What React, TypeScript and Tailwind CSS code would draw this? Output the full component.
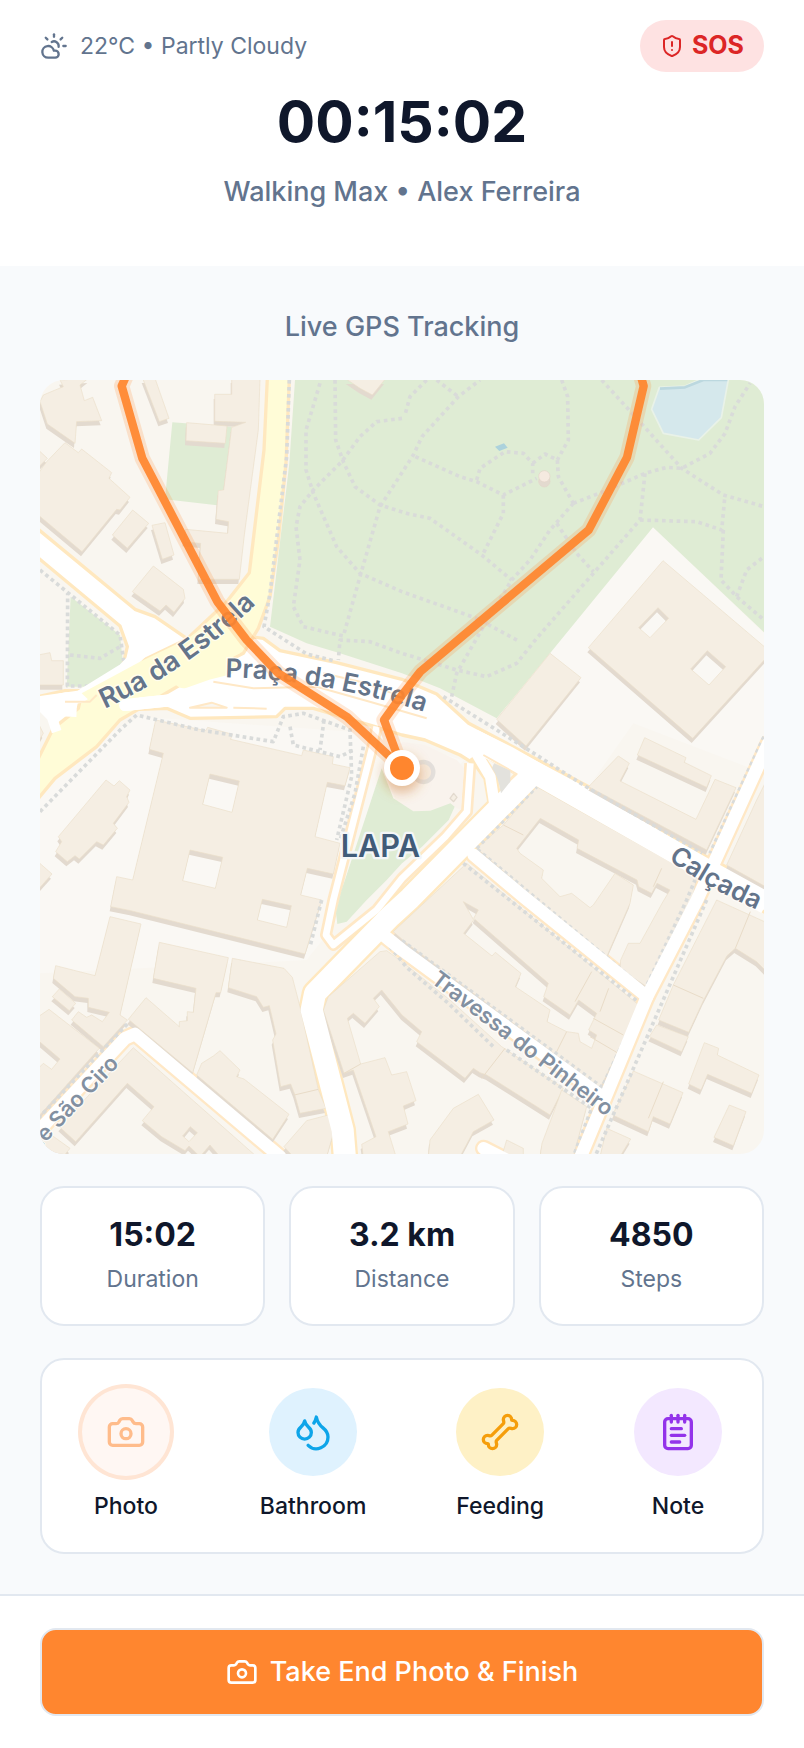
import React from 'react';
import { Bone, Camera, CloudSun, Droplets, NotepadText, ShieldAlert } from 'lucide-react';

const BUILDINGS = [
  'M60 0L145 -5L120 15L133 62L158 52L185 122L110 125L105 190L22 132L0 65L10 45L70 20Z',
  'M75 188L115 218L125 207L215 278L207 295L270 352L240 390L230 388L126 515L-5 405L-5 280L20 245Z',
  'M-5 210L22 235L-5 262Z',
  'M278 390L326 430L262 505L217 465Z',
  'M336 436L375 428L402 525L367 538Z',
  'M340 558L430 628L435 655L402 697L378 675L360 693L277 635Z',
  'M308 -5L345 -5L387 115L358 125Z',
  'M575 -5L660 -5L655 150L613 465L598 598L475 598L482 490L430 485L437 448L563 460L566 425L528 418L535 332L551 330L575 142L617 127L524 124L524 43L575 43Z',
  'M440 128L561 138L556 190L438 182Z',
  'M920 -2L1035 -2L997 45L960 25Z',
  'M-5 825L30 818L35 842L70 842L70 915L-5 915Z',
  'M-5 1030L10 1060L-5 1085Z',
  // basilica with its courtyards
  'M347 1020L497 1052L503 1042L577 1063L572 1078L785 1127L790 1110L880 1130L877 1152L930 1163L915 1217L862 1207L825 1370L900 1390L880 1482L802 1465L782 1545L845 1560L795 1722L272 1592L212 1580L230 1490L278 1500L370 1120L328 1108ZM510 1182L598 1203L576 1297L488 1273ZM450 1410L548 1432L526 1525L428 1502ZM667 1558L754 1577L740 1642L652 1620Z',
  'M198 1200L222 1218L238 1202L270 1230L260 1250L267 1267L220 1330L232 1345L190 1395L170 1385L118 1437L105 1427L82 1445L47 1415L65 1385L55 1370Z',
  'M-5 1446L36 1482L-5 1528Z',
  'M210 1610L303 1632L240 1905L262 1920L190 2000L95 1920L115 1895L140 1912L155 1905L187 1925L208 1897L145 1882L145 1855L105 1850L40 1795L47 1757L165 1787Z',
  'M58 1827L107 1870L88 1892L37 1850Z',
  'M-5 1910L27 1888L178 2005L-5 2210L-5 2065L10 2050L35 2068L60 2037L-5 1982Z',
  'M358 1687L565 1733L542 1838L528 1838L458 2078L265 1918L318 1853L418 1940L418 1925L442 1922L442 1895L460 1897L468 1825L340 1795Z',
  'M577 1735L732 1765L757 1792L780 1880L835 2130L858 2185L780 2200L763 2140L752 2112L722 2120L698 1980L708 1962L688 1877L670 1882L650 1850L565 1823Z',
  'M540 2012L600 2070L590 2090L612 2097L747 2203L698 2278L470 2085L485 2050L520 2028Z',
  'M732 2300L800 2222L865 2205L880 2260L860 2330L760 2330Z',
  'M280 2003L650 2330L540 2330L510 2295L480 2330L447 2298L435 2312L365 2270L307 2222L342 2180L262 2110L107 2285L58 2240ZM451 2240L472 2258L447 2285L428 2268Z',
  'M20 2255L90 2305L70 2330L-5 2330L-5 2275Z',
  'M1020 1715L1040 1712L1086 1745L1230 1860L1385 2000L1570 2125L1530 2205L1340 2085L1320 2078L1300 2065L1275 2095L1130 1985L1145 1955L1086 1905L1025 1830L1000 1855L1018 1880L975 1930L940 1900L922 1915L962 2052L1035 2033L1055 2085L1100 2075L1128 2162L1090 2178L1104 2232L1045 2255L1068 2330L970 2330L965 2293L1008 2270L940 2070L912 2080L850 1890L865 1850Z',
  'M1280 1450L1790 1870L1800 1880L1680 2125L1100 1690L1060 1655ZM1270 1565L1315 1590L1301 1615L1525 1810L1511 1850L1590 1905L1616 1860L1670 1900L1646 1950L1670 1965L1655 2005L1620 1985L1615 1960L1580 1955L1521 1925L1530 1890L1426 1820L1443 1780L1366 1717L1356 1728L1271 1660L1301 1620Z',
  'M1490 1220L1970 1490L1960 1545L1820 1820L1700 1740L1310 1405L1390 1335ZM1501 1315L1616 1380L1611 1405L1791 1500L1796 1520L1835 1540L1851 1510L1890 1530L1866 1570L1800 1690L1765 1690L1742 1740L1740 1765L1700 1730L1770 1570L1780 1515L1725 1480L1660 1575L1650 1583L1595 1540L1560 1550L1505 1495L1510 1470L1440 1420L1430 1405Z',
  'M1530 820L1623 893L1458 1098L1370 1018Z',
  'M1869 542L2180 806L2180 832L1958 1075L1645 803ZM1854 683L1886 715L1830 773L1796 743ZM2002 812L2057 860L2007 915L1952 867Z',
  'M1814 1073L1938 1133L1933 1147L2014 1187L2000 1222L1792 1125Z',
  'M1735 1128L1768 1150L1740 1203L1968 1318L2025 1198L2088 1223L2000 1410L1646 1220Z',
  'M2180 1200L2150 1260L2060 1455L2180 1522Z',
  'M2030 1560L2180 1628L2180 1775L2150 1745L2086 1705L2061 1727L1990 1862L1946 1957L1856 1920L1900 1815Z',
  'M1850 1935L1945 1970L1925 2015L1828 1970Z',
  'M1993 1988L2036 2005L2032 2025L2157 2085L2135 2140L2003 2083L1983 2130L1946 2112Z',
  'M2068 2175L2118 2195L2080 2297L2022 2272Z',
  'M1780 2073L1929 2138L1890 2232L1840 2210L1825 2255L1718 2205Z',
  'M1700 2245L1772 2277L1740 2330L1680 2330Z',
  'M1315 2143L1362 2220L1300 2255L1260 2330L1165 2330L1170 2280L1240 2185Z',
  'M1400 2280L1450 2305L1450 2330L1385 2330Z',
  'M1565 2130L1640 2180L1600 2330L1500 2330L1506 2290L1540 2200Z',
];

// party walls between neighbouring houses
const WALLS =
  'M1390 1335L1450 1365M1865 1465L1840 1520M1655 1775L1605 1865M1706 1825L1680 1895M1660 1915L1750 1965M1650 1970L1735 2020M1580 1955L1545 2025M1395 2005L1325 2095M1900 1815L1990 1855M1870 2105L1825 2215M2131 1595L2086 1705M763 2145L835 2128M962 2052L912 2080';

const FOOTPATHS = [
  'M840 10L798 150L798 270L820 340L890 500L960 580L1086 635L1310 715L1440 785',
  'M885 0L887 180L910 245L945 320L1020 375L1100 400L1170 415L1325 525L1415 600',
  'M1086 115L1010 125L960 170L905 245L820 330L780 380L768 440L780 540L760 680L790 740L910 768L960 590L1020 380L1120 225L1146 170L1255 50L1320 0',
  'M1126 230L1260 290L1310 305L1390 345L1490 295',
  'M1190 0L1255 50M1160 0L1110 50L1095 105',
  'M1310 300L1320 265L1395 215L1450 220L1478 250L1478 280',
  'M1478 250L1515 222L1552 240L1555 290L1600 370',
  'M1565 0L1583 50L1585 180L1552 240',
  'M1390 345L1390 400L1330 520',
  'M1600 370L1530 450L1470 540L1415 600L1360 690L1310 775L1250 880L1235 950',
  'M1600 370L1690 335L1815 280L1880 262L1925 265L2010 220L2055 160L2085 80L2130 10',
  'M1685 0L1790 115L1925 265L2050 345L2172 380',
  'M1815 280L1800 420L1660 580L1490 775L1430 850L1340 890L1250 870L1086 820L990 785L900 780L895 840',
  'M1800 420L1970 425L2045 450L2055 345M2050 450L2043 600L2090 650L2172 720M2090 650L2120 570L2172 530',
  'M1550 430L1610 520L1660 575',
];

const SIDEWALKS = [
  'M748 0L740 230L690 640L672 740L800 822L880 842',
  'M1210 950L1450 1100L1646 1225L1986 1420M2172 1070L2010 1420',
  'M0 570L240 765L252 850L165 918L82 918L83 640M90 825L180 835L240 800',
  'M0 1295L240 1050L290 1005L480 1050L700 1085L730 1010L790 1000L930 1050L935 1190L890 1380',
  'M970 1100L945 1240L900 1380M750 1040L760 1095L900 1130L940 1110M852 1020L840 1110',
  'M845 1560L810 1700M1310 1405L1490 1220',
  'M1312 1408L1815 1828L1940 1560L1965 1500M1270 1450L1800 1870',
  'M2000 1560L1665 2330M1086 1682L1686 2122L1800 1880',
  'M1050 1700L1100 1762L1225 1870L1360 2000M1400 2010L1655 2185L1600 2330',
  'M-5 2215L262 1932',
];

const MINOR_ROADS = [
  'M1010 1040L1000 1090L880 1560L858 1665L880 1695L1010 1590L1086 1495L1216 1370L1281 1295L1291 1150',
];

const SIDE_ROADS = [
  'M1301 1425L1450 1550L1821 1850',
  'M1030 1665L1086 1710L1686 2150',
  'M2185 1090L2010 1475L1971 1560L1821 1850L1620 2335',
  'M-20 2270L255 1975L285 1962L720 2330',
  'M1331 2305L1420 2350',
];

const MAIN_ROAD = 'M1470 1190L1110 1555L1050 1610L825 1840L815 1890L908 2250L915 2335';

const SQUARE =
  'M-5 448L285 688L345 710L440 775L560 760L670 775L720 812L890 848L1086 898L1190 942L1286 1030L1400 1090L1646 1220L1990 1425L2180 1525L2180 1600L1990 1500L1500 1222L1435 1185L1320 1120L1300 1150L1260 1125L1155 1080L1086 1065L1005 1040L820 985L735 985L710 1010L450 1015L380 985L240 990L110 1010L60 1055L40 1010L-5 985L-5 950L75 932L150 932L245 872L262 800L240 738L-5 534Z';

const AVENUE =
  'M682 -5L748 -5L738 250L715 480L690 650L655 745L610 820L480 885L420 915L300 985L240 1020L170 1100L45 1195L-5 1255L-5 1135L40 1045L115 985L125 940L300 845L440 778L560 665L628 578L672 210Z';

const ROUTE =
  'M262 -20L245 18L307 235L532 665L620 780L715 880L920 1010L1086 1164L1032 1020L1086 945L1141 875L1646 450L1761 232L1811 18L1800 -20';

const LiveMap: React.FC = () => {
  return (
    <svg
      viewBox="0 0 2172 2322"
      role="img"
      aria-label="Live map of the walk around Praça da Estrela"
      className="block h-auto w-full rounded-3xl bg-[#f9f6f0]"
      fontFamily="Inter, 'Noto Sans', sans-serif"
      strokeLinejoin="round"
    >
      <defs>
        <path id="rua" d="M194 986Q480 855 710 610" />
        <path id="praca" d="M556 892Q870 897 1220 1018" />
        <path id="calcada" d="M1884 1438Q2010 1532 2200 1610" />
        <path id="ciro" d="M-12 2318L350 1936" />
        <path id="travessa" d="M1170 1806L1760 2258" />
        <filter id="glow" x="-50%" y="-50%" width="200%" height="200%">
          <feGaussianBlur stdDeviation="18" />
        </filter>
      </defs>

      <path d="M0 1170L300 1010L1000 1060L1300 1150L1646 1220L1780 1030L2172 1180L2172 760L1839 442L1370 1015L800 1740L0 1780Z" fill="#faf8f4" />

      {/* parks and water */}
      <g fill="#dfecd4">
        <path d="M765 0L748 250L690 740L800 790L900 820L1086 880L1200 925L1370 1015L1530 820L1839 442L2172 757L2172 0Z" />
        <path d="M397 127L575 140L551 330L535 332L531 376L375 358Z" />
        <path d="M92 650L240 765L250 860L165 920L80 920Z" />
      </g>
      <path d="M1858 22L1935 18L1990 -6L2066 -6L2044 113L1976 180L1870 160L1835 88Z" fill="#d5e8ec" stroke="#e9f2e8" strokeWidth="5" />
      <path d="M1860 26L1935 22L1990 0L2062 0" fill="none" stroke="#bcd8df" strokeWidth="8" />
      <path d="M1365 200L1392 190L1403 203L1378 213Z" fill="#acd2dc" />

      <g fill="none" stroke="#d9dbd9" strokeWidth="11" strokeDasharray="11 11">
        {FOOTPATHS.map((d) => (
          <path key={d} d={d} />
        ))}
      </g>

      {/* roads: casing first, then surface */}
      <path d={SQUARE} fill="#ffffff" stroke="#ffe8bf" strokeWidth="10" />
      <g fill="none" stroke="#ffe8c6">
        {MINOR_ROADS.map((d) => (
          <path key={d} d={d} strokeWidth="36" />
        ))}
        {SIDE_ROADS.map((d) => (
          <path key={d} d={d} strokeWidth="52" strokeLinecap="round" />
        ))}
      </g>
      <path d={MAIN_ROAD} fill="none" stroke="#ffe8bf" strokeWidth="80" />
      <path d="M1306 1125L1351 1190L1366 1280" fill="none" stroke="#ffe8bf" strokeWidth="44" />
      <path d={AVENUE} fill="#fffcd7" stroke="#ffe8bf" strokeWidth="10" />

      {/* the plaza next to the basilica */}
      <path d="M1086 1085L1155 1095L1250 1140L1272 1165L1262 1290L1231 1275L1171 1295L1120 1298L1070 1270L1030 1165Z" fill="#f9f3ed" />
      <path d="M1025 1165L1060 1255L1120 1294L1171 1292L1231 1270L1244 1280L1226 1320L1146 1400L1086 1450L1040 1500L980 1560L920 1625L892 1632L888 1600L905 1530Z" fill="#dfecd4" />
      <circle cx="1150" cy="1176" r="30" fill="#f6e9dc" stroke="#e3dfdb" strokeWidth="13" />
      <path d="M1241 1240L1251 1252L1241 1265L1230 1255Z" fill="#f5eee3" stroke="#e3dacf" strokeWidth="4" />

      <g transform="translate(-3 14)" fill="#e3dacf" fillRule="evenodd">
        {BUILDINGS.map((d) => (
          <path key={d} d={d} />
        ))}
      </g>
      <g fill="#f5eee3" fillRule="evenodd" stroke="#ecdfca" strokeWidth="2">
        {BUILDINGS.map((d) => (
          <path key={d} d={d} />
        ))}
      </g>
      <path d={WALLS} fill="none" stroke="#e9dcc8" strokeWidth="3" />
      <g stroke="#e3d5c9" strokeWidth="2">
        <circle cx="1513" cy="304" r="17" fill="#e3dacf" />
        <circle cx="1513" cy="289" r="17" fill="#f5eae0" />
      </g>

      <g fill="none" stroke="#d9dbda" strokeWidth="11" strokeDasharray="11 10">
        {SIDEWALKS.map((d) => (
          <path key={d} d={d} />
        ))}
      </g>

      <g fill="none" stroke="#ffffff">
        {MINOR_ROADS.map((d) => (
          <path key={d} d={d} strokeWidth="20" />
        ))}
        {SIDE_ROADS.map((d) => (
          <path key={d} d={d} strokeWidth="38" strokeLinecap="round" />
        ))}
        <path d={MAIN_ROAD} strokeWidth="66" />
        <path d="M1306 1115L1351 1190L1366 1290" strokeWidth="32" />
        <path d="M1300 1080L1400 1130L1990 1465L2180 1570" strokeWidth="66" />
        <path d="M340 780L250 870L120 950L-5 968M60 990L110 992" strokeWidth="38" />
        <path d="M0 975L35 1010L50 1055" strokeWidth="30" />
        <path d="M255 975L450 955L820 945L1086 1010L1250 1050" strokeWidth="36" strokeLinecap="round" />
      </g>
      <path d="M125 940L300 845L440 778L560 690L600 820L480 880L300 950L200 1010Z" fill="#fffcd7" />
      <path d="M255 975L450 955" fill="none" stroke="#ffffff" strokeWidth="36" strokeLinecap="round" />
      <path d="M430 895L500 870L560 855" fill="none" stroke="#fffcd7" strokeWidth="60" strokeLinecap="round" />

      {/* traffic islands and kerbs */}
      <g fill="none" stroke="#ffe8c6" strokeWidth="6">
        <path d="M450 983L515 968L560 983ZM580 983L680 986" fill="#f9f6f0" />
        <path d="M520 905L640 925L830 920L1000 968L1160 1015M850 880L960 905L1086 950" />
        <path d="M75 965L150 965L170 945" />
        <path d="M1330 1125L1430 1182L1400 1210" />
      </g>
      <path d="M1362 1150L1411 1172L1411 1205L1383 1240Q1375 1190 1356 1165Z" fill="#e3e2dd" />

      {/* street names */}
      <g fill="#64748a" stroke="#ffffff" strokeOpacity="0.6" strokeWidth="8" paintOrder="stroke" fontWeight="600" fontSize="78">
        <text fontSize="81"><textPath href="#rua">Rua da Estrela</textPath></text>
        <text><textPath href="#praca">Praça da Estrela</textPath></text>
        <text><textPath href="#calcada">Calçada</textPath></text>
      </g>
      <g fill="#8290a1" stroke="#ffffff" strokeOpacity="0.7" strokeWidth="8" paintOrder="stroke" fontWeight="600" fontSize="66">
        <text><textPath href="#ciro">de São Ciro</textPath></text>
        <text><textPath href="#travessa">Travessa do Pinheiro</textPath></text>
      </g>
      <text x="1021" y="1431" textAnchor="middle" fontSize="92" fontWeight="600" fill="#415b78" stroke="#f4f6f8" strokeWidth="14" paintOrder="stroke">
        LAPA
      </text>

      {/* walked route and current position */}
      <path d={ROUTE} fill="none" stroke="#ff8a33" strokeOpacity="0.2" strokeWidth="46" />
      <path d={ROUTE} fill="none" stroke="#ff862e" strokeOpacity="0.92" strokeWidth="25" />
      <circle cx="1086" cy="1182" r="56" fill="#c9762f" fillOpacity="0.45" filter="url(#glow)" />
      <circle cx="1086" cy="1164" r="54" fill="#ffffff" />
      <circle cx="1086" cy="1164" r="36" fill="#ff862e" />
    </svg>
  );
};

interface StatCardProps {
  value: string;
  label: string;
}

const StatCard: React.FC<StatCardProps> = ({ value, label }) => {
  return (
    <div className="flex flex-col items-center rounded-3xl border-2 border-slate-200 bg-white px-4 py-6">
      <p className="text-[32px] leading-[46px] font-bold text-slate-900">{value}</p>
      <p className="mt-1 mb-1 text-[23px] leading-[34px] text-slate-500">{label}</p>
    </div>
  );
};

interface ActionButtonProps {
  label: string;
  circle: string;
  children: React.ReactNode;
}

const ActionButton: React.FC<ActionButtonProps> = ({ label, circle, children }) => {
  return (
    <button type="button" className="flex flex-col items-center gap-3">
      <span className={`flex size-[88px] items-center justify-center rounded-full ${circle}`}>{children}</span>
      <span className="text-[23px] leading-9 font-medium text-slate-900">{label}</span>
    </button>
  );
};

const App: React.FC = () => {
  return (
    <div className="flex min-h-screen flex-col bg-slate-50 font-['Inter','Liberation_Sans',sans-serif]">
      <header className="bg-white px-10 pt-5 pb-[54px]">
        <div className="flex items-center justify-between">
          <div className="flex items-center gap-3 text-[23px] leading-8 text-slate-500">
            <CloudSun size={28} />
            <span>22°C • Partly Cloudy</span>
          </div>
          <button
            type="button"
            className="flex h-[52px] items-center gap-2 rounded-full bg-[#fee2e2] px-5 text-[25px] font-bold text-[#dc2626]"
          >
            <ShieldAlert size={24} />
            SOS
          </button>
        </div>
        <h1 className="mt-5 text-center text-[57px] leading-[60px] font-bold text-slate-900">00:15:02</h1>
        <p className="mt-5 text-center text-[27px] leading-10 font-medium text-slate-500">Walking Max • Alex Ferreira</p>
      </header>

      <main className="flex flex-1 flex-col gap-8 p-10">
        <h2 className="text-center text-[27px] leading-[42px] font-medium text-slate-500">Live GPS Tracking</h2>

        <LiveMap />

        <section className="grid grid-cols-3 gap-6">
          <StatCard value="15:02" label="Duration" />
          <StatCard value="3.2 km" label="Distance" />
          <StatCard value="4850" label="Steps" />
        </section>

        <section className="flex justify-between rounded-3xl border-2 border-slate-200 bg-white px-10 py-7">
          <ActionButton label="Photo" circle="bg-[#fff7f3] text-[#ffbc8b] ring-4 ring-[#ffe5d4]">
            <Camera size={40} />
          </ActionButton>
          <ActionButton label="Bathroom" circle="bg-[#dff2fe] text-[#0ea5e9]">
            <Droplets size={40} />
          </ActionButton>
          <ActionButton label="Feeding" circle="bg-[#fef1c6] text-[#f59e0b]">
            <Bone size={40} />
          </ActionButton>
          <ActionButton label="Note" circle="bg-[#f3e8ff] text-[#9333ea]">
            <NotepadText size={40} />
          </ActionButton>
        </section>
      </main>

      <footer className="border-t-2 border-slate-200 bg-white px-10 py-8">
        <button
          type="button"
          className="flex h-[88px] w-full items-center justify-center gap-3 rounded-2xl border-2 border-slate-200 bg-[#ff862f] text-[27px] font-medium text-white"
        >
          <Camera size={32} />
          Take End Photo &amp; Finish
        </button>
      </footer>
    </div>
  );
};

export default App;
